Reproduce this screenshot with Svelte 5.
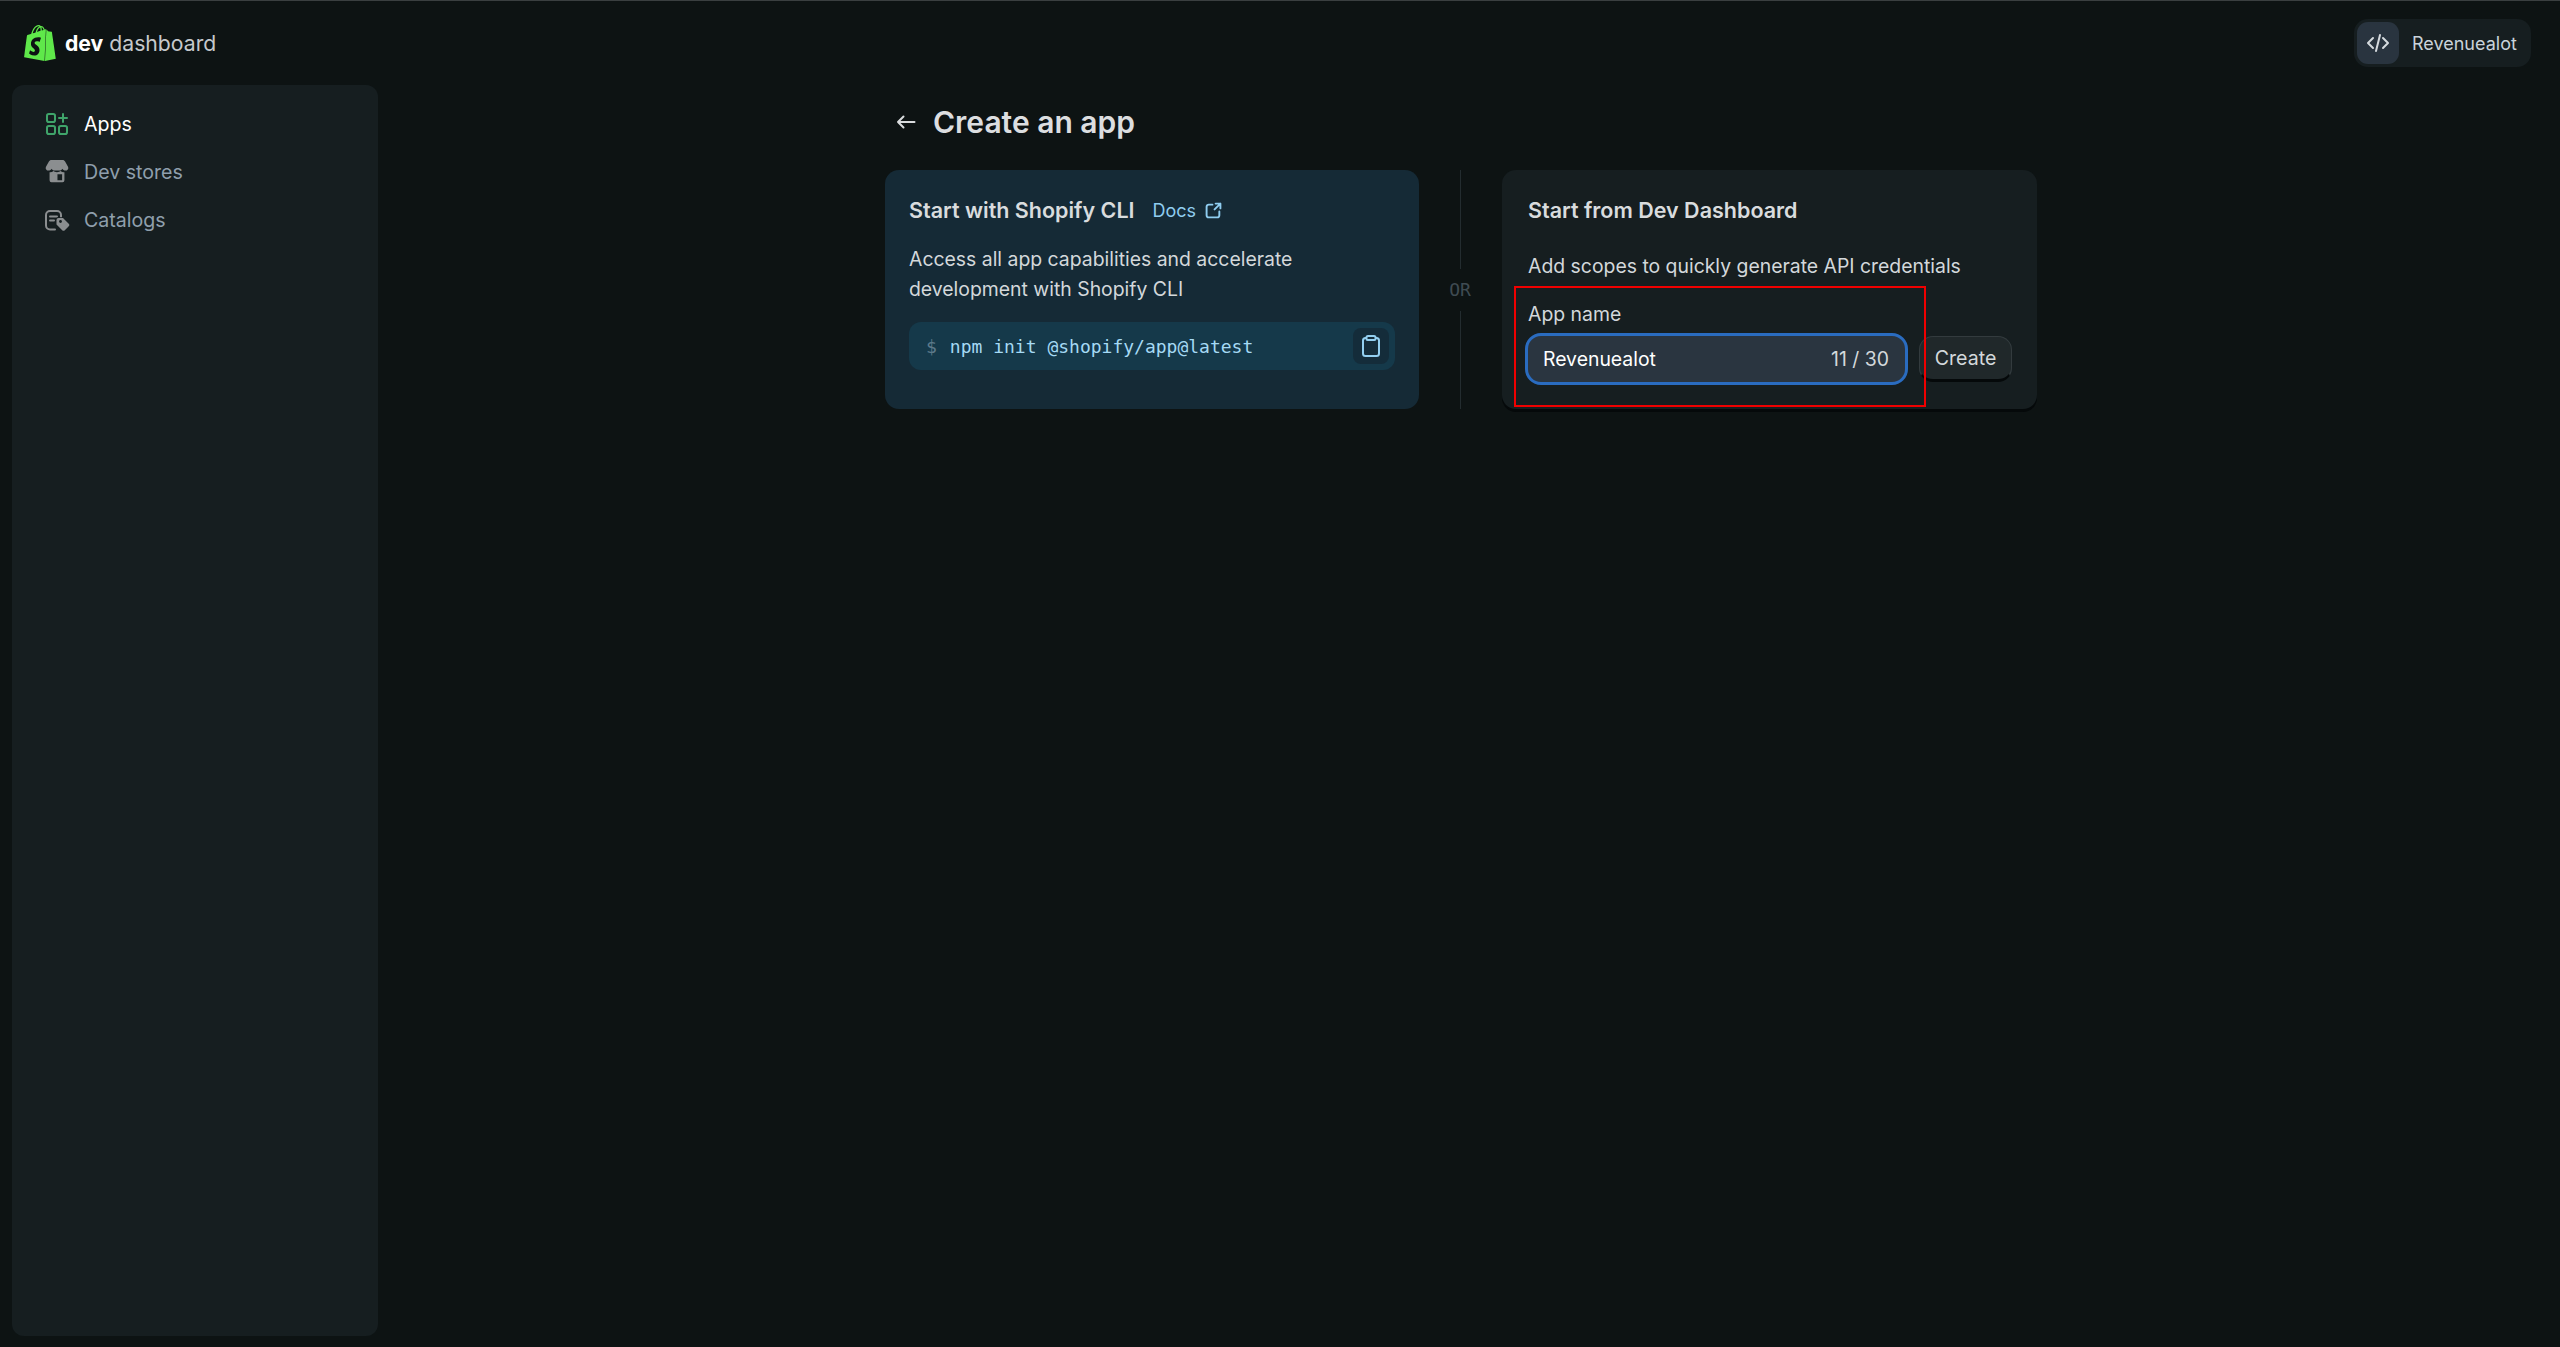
<script lang="ts">
let appName = 'Revenuealot';
const nav = [
	{ label: 'Apps', icon: 'apps', active: true },
	{ label: 'Dev stores', icon: 'store', active: false },
	{ label: 'Catalogs', icon: 'catalog', active: false }
];
</script>

<div class="page">
	<header class="topbar">
		<div class="brand">
			<svg class="logo" viewBox="1.400 0 21.200 24" aria-hidden="true">
				<path fill="#5fe84a" d="M15.337 23.979l7.216-1.561s-2.604-17.613-2.625-17.73c-.018-.116-.114-.192-.211-.192s-1.929-.136-1.929-.136-1.275-1.274-1.439-1.411c-.045-.037-.075-.057-.121-.074l-.914 21.104h.023zM11.71 11.305s-.81-.424-1.774-.424c-1.447 0-1.504.906-1.504 1.141 0 1.232 3.24 1.715 3.24 4.629 0 2.295-1.44 3.76-3.406 3.76-2.354 0-3.54-1.465-3.54-1.465l.646-2.086s1.245 1.066 2.28 1.066c.675 0 .975-.545.975-.932 0-1.619-2.654-1.694-2.654-4.359-.034-2.237 1.571-4.416 4.827-4.416 1.257 0 1.875.361 1.875.361l-.945 2.715-.02.01zM11.17.83c.136 0 .271.038.405.135-.984.465-2.064 1.639-2.508 3.992-.656.213-1.293.405-1.889.578C7.697 3.75 8.951.84 11.17.84V.83zm1.235 2.949v.135c-.754.232-1.583.484-2.394.736.466-1.777 1.333-2.645 2.085-2.971.193.501.309 1.176.309 2.1zm.539-2.234c.694.074 1.141.867 1.429 1.755-.349.114-.735.231-1.158.366v-.252c0-.752-.096-1.371-.271-1.871v.002zm2.992 1.289c-.02 0-.06.021-.078.021s-.289.075-.714.21c-.423-1.233-1.176-2.37-2.508-2.37h-.115C12.135.209 11.669 0 11.265 0 8.159 0 6.675 3.877 6.21 5.846c-1.194.365-2.063.636-2.16.674-.675.213-.694.232-.772.87-.075.462-1.83 14.063-1.83 14.063L15.009 24l.927-21.166z" />
			</svg>
			<span class="wordmark"><b>dev</b> dashboard</span>
		</div>
		<button class="org">
			<span class="org-icon">
				<svg viewBox="0 0 24 24" width="24" height="24" fill="none" stroke="#d5dade" stroke-width="2" stroke-linecap="round" stroke-linejoin="round">
					<path d="M7 7l-5 5 5 5M17 7l5 5-5 5M14 4l-4 16" />
				</svg>
			</span>
			<span>{appName}</span>
		</button>
	</header>

	<div class="shell">
		<aside class="sidebar">
			<nav>
				{#each nav as item}
					<a class="nav-item" class:active={item.active} href="#top">
						{#if item.icon === 'apps'}
							<svg viewBox="-2 -2 26 26" fill="none" stroke="#3fa46a" stroke-width="2">
								<rect x="1" y="1" width="8" height="8" rx="1.800" />
								<rect x="1" y="13" width="8" height="8" rx="1.800" />
								<rect x="13" y="13" width="8" height="8" rx="1.800" />
								<path d="M17 1v8M13 5h8" stroke-linecap="round" />
							</svg>
						{:else if item.icon === 'store'}
							<svg viewBox="-1 0 28 28" fill="#8b8e90">
								<path d="M7 1h12c1.200 0 2.200.7 2.700 1.700L25 8.500c.8 2.200-.8 4-2.900 4-1.500 0-2.700-.8-3.300-2-.6 1.200-1.700 2-3.200 2h-5.200c-1.500 0-2.600-.8-3.200-2-.6 1.200-1.800 2-3.300 2-2.100 0-3.700-1.800-2.900-4l3.300-5.800C4.800 1.700 5.800 1 7 1z" />
								<path fill-rule="evenodd" d="M5 14.300c1.600.2 3-.3 4.200-1.300 1 .8 2 1.200 3.800 1.200s2.800-.4 3.800-1.200c1.200 1 2.600 1.500 4.200 1.300V23a2 2 0 0 1-2 2H7a2 2 0 0 1-2-2v-8.700zM13.500 16.500v6.500h5v-6.500z" />
							</svg>
						{:else}
							<svg viewBox="0 0 26 26" fill="none" stroke="#8b8e90" stroke-width="2" stroke-linecap="round">
								<path d="M11 22.500H6a4 4 0 0 1-4-4V8a4 4 0 0 1 4-4h7a4 4 0 0 1 4 4v3" />
								<path d="M6 9.500h7M6 13.500h4" />
								<path fill="#8b8e90" stroke="#161e20" stroke-width="1.500" paint-order="stroke" d="M14.500 11h4.500l5.500 5.500a2 2 0 0 1 0 3l-3.500 3.500a2 2 0 0 1-3 0l-5.500-5.500v-4.500a2 2 0 0 1 2-2z" />
								<circle cx="16.500" cy="14.500" r="1.400" fill="#161e20" stroke="none" />
							</svg>
						{/if}
						<span>{item.label}</span>
					</a>
				{/each}
			</nav>
		</aside>

		<main class="content">
			<div class="content-inner">
				<div class="title-row">
					<svg viewBox="0 0 20 20" width="20" height="20" fill="none" stroke="#d9dcde" stroke-width="2" stroke-linecap="round" stroke-linejoin="round">
						<path d="M18.500 10H2M7.500 4.500L2 10l5.500 5.500" />
					</svg>
					<h1>Create an app</h1>
				</div>

				<div class="options">
					<section class="card cli">
						<div class="card-head">
							<h2>Start with Shopify CLI</h2>
							<a class="docs" href="#top">Docs
								<svg viewBox="0 0 16 16" width="17" height="17" fill="none" stroke="#8fcdf0" stroke-width="1.800" stroke-linecap="round" stroke-linejoin="round">
									<path d="M7 2.500H3.500a2 2 0 0 0-2 2v8a2 2 0 0 0 2 2h8a2 2 0 0 0 2-2V9M9 7l5.500-5.500M10 1.500h4.500V6" />
								</svg>
							</a>
						</div>
						<p>Access all app capabilities and accelerate development with Shopify CLI</p>
						<div class="command">
							<span class="dollar">$</span>
							<code>npm init @shopify/app@latest</code>
							<button class="copy" aria-label="Copy">
								<svg viewBox="0 0 20 24" width="20" height="24" fill="none" stroke="#93cff0" stroke-width="2" stroke-linejoin="round">
									<rect x="2" y="4" width="16" height="18" rx="2.500" />
									<path d="M5.500 5V3.500A1.500 1.500 0 0 1 7 2h6a1.500 1.500 0 0 1 1.500 1.500V5a1 1 0 0 1-1 1h-7a1 1 0 0 1-1-1z" fill="#142c3a" />
								</svg>
							</button>
						</div>
					</section>

					<div class="divider">
						<span class="line"></span>
						<span class="or">OR</span>
						<span class="line"></span>
					</div>

					<section class="card dash">
						<div class="card-head">
							<h2>Start from Dev Dashboard</h2>
						</div>
						<p>Add scopes to quickly generate API credentials</p>
						<label for="app-name">App name</label>
						<div class="form-row">
							<div class="field">
								<input id="app-name" value={appName} />
								<span class="count">{appName.length} / 30</span>
							</div>
							<button class="create">Create</button>
						</div>
						<span class="annotation"></span>
					</section>
				</div>
			</div>
		</main>
	</div>
</div>

<style>
	:global(body) {
		background: #0d1313;
		font-family: Inter, 'Liberation Sans', sans-serif;
		color: #e3e5e7;
	}

	.page {
		height: 1347px;
		box-sizing: border-box;
		border-top: 1px solid #3a3f40;
		display: flex;
		flex-direction: column;
		overflow: hidden;
	}

	.topbar {
		height: 84px;
		flex: none;
		display: flex;
		align-items: center;
		justify-content: space-between;
		padding: 0 29px 0 24px;
	}

	.brand {
		display: flex;
		align-items: center;
		gap: 9px;
	}

	.logo {
		width: 32px;
		height: 36px;
	}

	.wordmark {
		font-size: 21.200px;
		color: #c5c9cc;
	}

	.wordmark b {
		color: #fff;
		font-weight: 700;
	}

	.org {
		display: flex;
		align-items: center;
		gap: 13px;
		width: 177px;
		height: 48px;
		padding: 0 3px;
		box-sizing: border-box;
		background: #161e20;
		border: none;
		border-radius: 14px;
		color: #c9d3da;
		font: 18px Inter, sans-serif;
	}

	.org-icon {
		width: 42px;
		height: 42px;
		border-radius: 11px;
		background: #29343f;
		display: flex;
		align-items: center;
		justify-content: center;
	}

	.shell {
		flex: 1;
		display: flex;
		padding: 0 16px 11px 12px;
		min-height: 0;
	}

	.sidebar {
		width: 366px;
		flex: none;
		background: #161e20;
		border-radius: 12px;
		padding-top: 15px;
		box-sizing: border-box;
	}

	.sidebar nav {
		display: flex;
		flex-direction: column;
	}

	.nav-item {
		height: 48px;
		display: flex;
		align-items: center;
		gap: 14px;
		padding-left: 32px;
		font-size: 19.6px;
		color: #8f9fac;
		text-decoration: none;
	}

	.nav-item svg {
		width: 26px;
		height: 26px;
		flex: none;
	}

	.nav-item.active {
		color: #fff;
	}

	.content {
		flex: 1;
		display: flex;
		justify-content: center;
	}

	.content-inner {
		width: 1152px;
	}

	.title-row {
		display: flex;
		align-items: center;
		gap: 17px;
		height: 74px;
		padding: 0 0 11px 11px;
	}

	h1 {
		margin: 0;
		font-size: 30px;
		font-weight: 600;
		color: #dcdee0;
	}

	.options {
		display: grid;
		grid-template-columns: 534px 1fr 535px;
		height: 238px;
	}

	.card {
		position: relative;
		border-radius: 14px;
		padding: 24px;
		box-sizing: border-box;
	}

	.cli {
		background: #152a36;
	}

	.dash {
		background: #161e20;
		padding-left: 26px;
		box-shadow: 0 3px 0 #05090a;
	}

	.card-head {
		display: flex;
		align-items: center;
		gap: 18px;
		height: 32px;
	}

	h2 {
		margin: 0;
		font-size: 21.500px;
		font-weight: 600;
		color: #d9dcde;
	}

	.docs {
		display: flex;
		align-items: center;
		gap: 9px;
		font-size: 18px;
		color: #8fcdf0;
		text-decoration: none;
	}

	p {
		margin: 18px 0 0;
		font-size: 19.400px;
		line-height: 30px;
		color: #d3d8db;
	}

	.command {
		display: flex;
		align-items: center;
		height: 48px;
		margin-top: 18px;
		padding: 0 6px 0 17px;
		background: #15394a;
		border-radius: 12px;
		font-family: 'DejaVu Sans Mono', monospace;
		font-size: 18px;
	}

	.dollar {
		color: #5d7a8a;
		margin-right: 13px;
	}

	code {
		flex: 1;
		font: inherit;
		color: #a5daf5;
	}

	.copy {
		width: 36px;
		height: 36px;
		padding: 0;
		background: #142c3a;
		border: none;
		border-radius: 8px;
		display: flex;
		align-items: center;
		justify-content: center;
	}

	.divider {
		display: flex;
		flex-direction: column;
		align-items: center;
		padding-right: 1px;
	}

	.line {
		flex: 1;
		width: 1px;
		background: #232c2f;
	}

	.or {
		padding: 10px 0;
		font-family: 'DejaVu Sans Mono', monospace;
		font-size: 18px;
		line-height: 22px;
		color: #3f4b52;
	}

	.dash p {
		margin-top: 25px;
	}

	label {
		display: block;
		margin-top: 19px;
		font-size: 19.400px;
		line-height: 28px;
		color: #d3d8db;
	}

	.form-row {
		display: flex;
		align-items: center;
		gap: 11px;
		margin-top: 5px;
		margin-left: -3px;
	}

	.field {
		width: 383px;
		height: 52px;
		flex: none;
		box-sizing: border-box;
		display: flex;
		align-items: center;
		padding: 0 16px 0 15px;
		background: #2a3540;
		border: 3px solid #2a6cc0;
		border-radius: 16px;
	}

	input {
		flex: 1;
		min-width: 0;
		padding: 0;
		border: none;
		outline: none;
		background: transparent;
		color: #fff;
		font: 19.400px Inter, sans-serif;
	}

	.count {
		font-size: 19.400px;
		color: #d3d8db;
	}

	.create {
		width: 93px;
		height: 46px;
		flex: none;
		padding: 0;
		background: #20282a;
		border: 1px solid #333b3e;
		border-bottom: 3px solid #05090a;
		border-radius: 14px;
		color: #d3d8db;
		font: 19.600px Inter, sans-serif;
	}

	.annotation {
		position: absolute;
		left: 12px;
		top: 116px;
		width: 412px;
		height: 121px;
		box-sizing: border-box;
		border: 2px solid #f00000;
		pointer-events: none;
	}
</style>
